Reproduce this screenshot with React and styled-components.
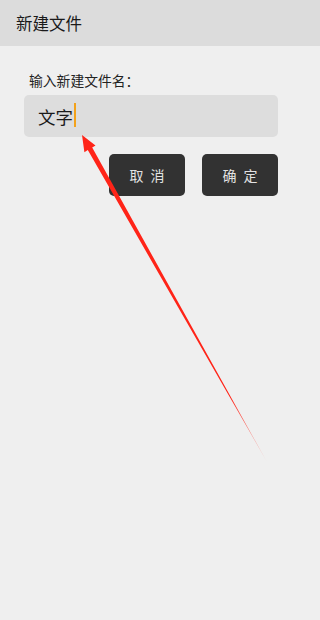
import React from "react";
import styled, { createGlobalStyle } from "styled-components";

const GlobalStyle = createGlobalStyle`
  html, body {
    margin: 0;
    padding: 0;
    background: #efefef;
  }
  body {
    font-family: "Noto Sans CJK SC", "Noto Sans", sans-serif;
    color: #1f1f1f;
  }
`;

const Page = styled.div`
  position: relative;
  width: 100%;
  height: 620px;
  background: #efefef;
  overflow: hidden;
`;

const Header = styled.div`
  height: 46px;
  background: #dcdcdc;
  display: flex;
  align-items: center;
  padding-left: 16px;
  font-size: 16.5px;
  color: #1a1a1a;
`;

const Content = styled.div`
  width: 254px;
  padding: 24px 0 0 24px;
  display: flex;
  flex-direction: column;
`;

const Label = styled.div`
  height: 20px;
  line-height: 20px;
  font-size: 13.8px;
  padding-left: 5px;
  margin-bottom: 5px;
  color: #222;
`;

const Field = styled.div`
  height: 42px;
  border-radius: 5px;
  background: #dddddd;
  display: flex;
  align-items: center;
  padding-left: 14px;
  font-size: 17.5px;
  color: #1a1a1a;
`;

const Caret = styled.span`
  display: inline-block;
  width: 2px;
  height: 24px;
  margin-left: 1px;
  margin-top: -2px;
  background: #f3a21b;
`;

const Actions = styled.div`
  display: flex;
  justify-content: flex-end;
  gap: 17px;
  margin-top: 17px;
`;

const Button = styled.button`
  width: 76px;
  height: 42px;
  border: none;
  border-radius: 5px;
  background: #323232;
  color: #e2e2e2;
  font-family: inherit;
  font-size: 14px;
  letter-spacing: 7px;
  padding: 0 0 0 7px;
  display: flex;
  align-items: center;
  justify-content: center;
`;

const Overlay = styled.svg`
  position: absolute;
  left: 0;
  top: 0;
  pointer-events: none;
`;

const Arrow = () => (
  <Overlay width="303" height="620" viewBox="0 0 303 620">
    <defs>
      <linearGradient id="fade" x1="82" y1="135" x2="267" y2="462" gradientUnits="userSpaceOnUse">
        <stop offset="0" stopColor="#ff2418" />
        <stop offset="0.8" stopColor="#ff2418" />
        <stop offset="1" stopColor="#ff2418" stopOpacity="0.2" />
      </linearGradient>
    </defs>
    <polygon
      points="82,135 95.5,145.6 92.2,147.6 267,462 87.8,150.1 84.4,152.2"
      fill="url(#fade)"
    />
  </Overlay>
);

const App = () => (
  <Page>
    <GlobalStyle />
    <Header>新建文件</Header>
    <Content>
      <Label>输入新建文件名：</Label>
      <Field>
        文字
        <Caret />
      </Field>
      <Actions>
        <Button>取消</Button>
        <Button>确定</Button>
      </Actions>
    </Content>
    <Arrow />
  </Page>
);

export default App;
